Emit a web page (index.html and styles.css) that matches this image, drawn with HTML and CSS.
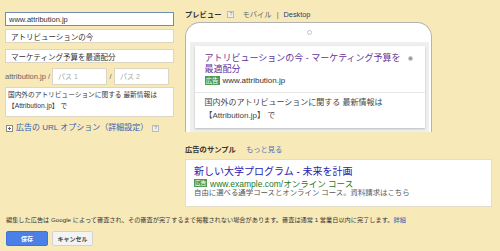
FILE: index.html
```html
<!DOCTYPE html>
<html>
    <head>
        <title>広告の編集</title>
        <link rel="stylesheet" href="styles.css">
    </head>

<body>
    <div class="page">
        <div class="editor">
            <div class="form">
                <input class="field focus" value="www.attribution.jp">
                <input class="field h2" value="アトリビューションの今">
                <input class="field h3" value="マーケティング予算を最適配分">
                <div class="paths">
                    <span class="domain">attribution.jp /</span>
                    <input class="field path" placeholder="パス 1">
                    <span class="slash">/</span>
                    <input class="field path" placeholder="パス 2">
                </div>
                <textarea class="field desc">国内外のアトリビューションに関する 最新情報は
【Attribution.jp】 で</textarea>
                <div class="url-opt">
                    <svg class="plus" width="7" height="7" viewBox="0 0 7 7">
                        <rect x="0.5" y="0.5" width="6" height="6" fill="#fff" stroke="#8a8a8a"/>
                        <path d="M2 3.5h3M3.5 2v3" stroke="#666"/>
                    </svg>
                    広告の URL オプション（詳細設定）
                    <span class="help">?</span>
                </div>
            </div>

            <div class="preview">
                <div class="tabs">
                    <span class="tab-title">プレビュー</span>
                    <span class="help">?</span>
                    <span class="tab">モバイル</span>
                    <span class="sep">|</span>
                    <a class="tab active">Desktop</a>
                </div>
                <div class="phone">
                    <div class="camera"></div>
                    <div class="screen">
                        <div class="ad-card">
                            <div class="ad-top">
                                <div class="ad-title">アトリビューションの今 - マーケティング予算を最適配分</div>
                                <span class="info"></span>
                            </div>
                            <div class="ad-url"><span class="badge">広告</span>www.attribution.jp</div>
                            <div class="ad-desc">国内外のアトリビューションに関する 最新情報は<br>【Attribution.jp】 で</div>
                        </div>
                    </div>
                </div>
                <div class="sample-head">広告のサンプル <a class="more">もっと見る</a></div>
                <div class="sample">
                    <div class="sample-title">新しい大学プログラム - 未来を計画</div>
                    <div class="sample-url"><span class="badge">広告</span>www.example.com/オンライン コース</div>
                    <div class="sample-desc">自由に選べる通学コースとオンライン コース。資料請求はこちら</div>
                </div>
            </div>
        </div>

        <p class="note">編集した広告は Google によって審査され、その審査が完了するまで掲載されない場合があります。審査は通常 1 営業日以内に完了します。<a>詳細</a></p>
        <div class="buttons">
            <button class="btn save">保存</button>
            <button class="btn cancel">キャンセル</button>
        </div>
    </div>
</body>
</html>
```

FILE: styles.css
```css
body{
    margin: 0;
    background: #f8e9b8;
    font-family: "Liberation Sans", "Noto Sans CJK JP", sans-serif;
    color: #333;
}
a{
    color: #3f62b5;
    cursor: pointer;
}
.page{
    padding: 0 8px 0 5px;
}
.editor{
    display: flex;
    gap: 11px;
    height: 207px;
}

/* 左側のフォーム */
.form{
    width: 169px;
    padding-top: 12px;
}
.field{
    display: block;
    box-sizing: border-box;
    width: 100%;
    height: 14px;
    margin: 0;
    padding: 0 5px;
    border: 1px solid #ddd6c3;
    border-radius: 0;
    background: #fff;
    font-family: "Liberation Sans", "Noto Sans CJK JP", sans-serif;
    font-size: 7.5px;
    color: #333;
    outline: none;
}
.field::placeholder{
    color: #aaa;
}
.field.focus{
    border-color: #6d8db6;
    padding-left: 3px;
}
.h2{
    margin-top: 3px;
}
.h3{
    margin-top: 6px;
}
.paths{
    display: flex;
    align-items: center;
    height: 17px;
    margin-top: 5px;
}
.domain{
    width: 47px;
    font-size: 7.5px;
    color: #666;
    white-space: nowrap;
}
.field.path{
    width: 55px;
    height: 17px;
    font-size: 7px;
}
.slash{
    width: 7px;
    text-align: center;
    font-size: 7.5px;
    color: #666;
}
.field.desc{
    height: 30px;
    margin-top: 2px;
    padding: 2px 2px;
    font-size: 6.7px;
    line-height: 10.5px;
    resize: none;
    overflow: hidden;
}
.url-opt{
    display: flex;
    align-items: center;
    margin-top: 5px;
    line-height: 12px;
    font-size: 8px;
    color: #3561b3;
    white-space: nowrap;
}
.plus{
    margin: 0 3px 0 1px;
}
.help{
    display: inline-block;
    box-sizing: border-box;
    width: 7px;
    height: 7px;
    margin-left: 4px;
    border: 1px solid #bbb;
    background: #f0f0f0;
    color: #888;
    font-size: 5px;
    line-height: 5px;
    text-align: center;
}

/* プレビュー */
.preview{
    width: 307px;
    padding-top: 8px;
}
.tabs{
    display: flex;
    align-items: center;
    height: 12px;
    font-size: 7.3px;
}
.tab-title{
    font-weight: bold;
    color: #333;
}
.tabs .help{
    margin-left: 6px;
}
.tab{
    margin-left: 8px;
    color: #666;
}
.sep{
    margin: 0 5px;
    color: #666;
}
.tabs .active{
    margin-left: 0;
    color: #24427f;
}
.phone{
    box-sizing: border-box;
    width: 247px;
    height: 110px;
    margin-top: 2px;
    padding: 0 2.5px 0 3.5px;
    border: 1.5px solid #b3b3b3;
    border-bottom: 0;
    border-radius: 15px 15px 0 0;
    background: #fff;
}
.camera{
    box-sizing: border-box;
    width: 5px;
    height: 5px;
    margin: 7px auto 0;
    border: 1px solid #c4c4c4;
    border-radius: 50%;
}
.screen{
    box-sizing: border-box;
    height: 90px;
    margin-top: 6.5px;
    padding: 4px 4px 0 5px;
    background: #efefef;
}
.ad-card{
    height: 82px;
    background: #fff;
    box-shadow: 0 1px 2px rgba(0, 0, 0, 0.22);
}
.ad-top{
    display: flex;
    justify-content: space-between;
    padding: 7px 12px 0 10px;
}
.ad-title{
    width: 200px;
    font-size: 9px;
    line-height: 11.5px;
    color: #663399;
}
.info{
    box-sizing: border-box;
    width: 5px;
    height: 5px;
    margin-top: 3.5px;
    border: 1px solid #ccc;
    border-radius: 50%;
    background: #999;
}
.ad-url{
    display: flex;
    align-items: center;
    height: 10px;
    padding: 0 10px 6.5px;
    border-bottom: 1px solid #e6e6e6;
    font-size: 8px;
    color: #333;
}
.badge{
    display: inline-block;
    width: 15px;
    height: 9px;
    margin-right: 3px;
    background: #4e9b4f;
    color: #fff;
    font-size: 6.3px;
    line-height: 9px;
    text-align: center;
}
.ad-desc{
    padding: 3px 10px 0;
    font-size: 8px;
    line-height: 13px;
    color: #444;
}

/* サンプル */
.sample-head{
    margin-top: 12px;
    line-height: 12px;
    font-size: 7.3px;
    font-weight: bold;
}
.more{
    margin-left: 8px;
    font-weight: normal;
    color: #5574bd;
}
.sample{
    margin-top: 3px;
    padding: 6px 9px 8px 8px;
    border: 1px solid #e4ddc9;
    background: #fff;
}
.sample-title{
    font-size: 10px;
    line-height: 12px;
    color: #2a22b0;
}
.sample-url{
    display: flex;
    align-items: center;
    height: 10px;
    font-size: 8.5px;
    color: #1b7a2a;
}
.sample-url .badge{
    width: 13px;
    height: 8px;
    line-height: 8px;
    font-size: 5.8px;
}
.sample-desc{
    font-size: 7.4px;
    line-height: 10px;
    color: #555;
}

/* 下の部分 */
.note{
    margin: 8px 0 0 1px;
    font-size: 6.2px;
    line-height: 10px;
    color: #333;
}
.buttons{
    display: flex;
    gap: 4px;
    margin: 6px 0 0 1px;
}
.btn{
    box-sizing: border-box;
    height: 15px;
    padding: 0;
    border-radius: 2px;
    font-family: "Liberation Sans", "Noto Sans CJK JP", sans-serif;
    font-size: 6px;
    font-weight: bold;
}
.save{
    width: 42px;
    border: 1px solid #3c72da;
    background: #4a80e8;
    color: #fff;
}
.cancel{
    width: 41px;
    border: 1px solid #d3d3d3;
    background: #f3f3f3;
    color: #444;
}
```
